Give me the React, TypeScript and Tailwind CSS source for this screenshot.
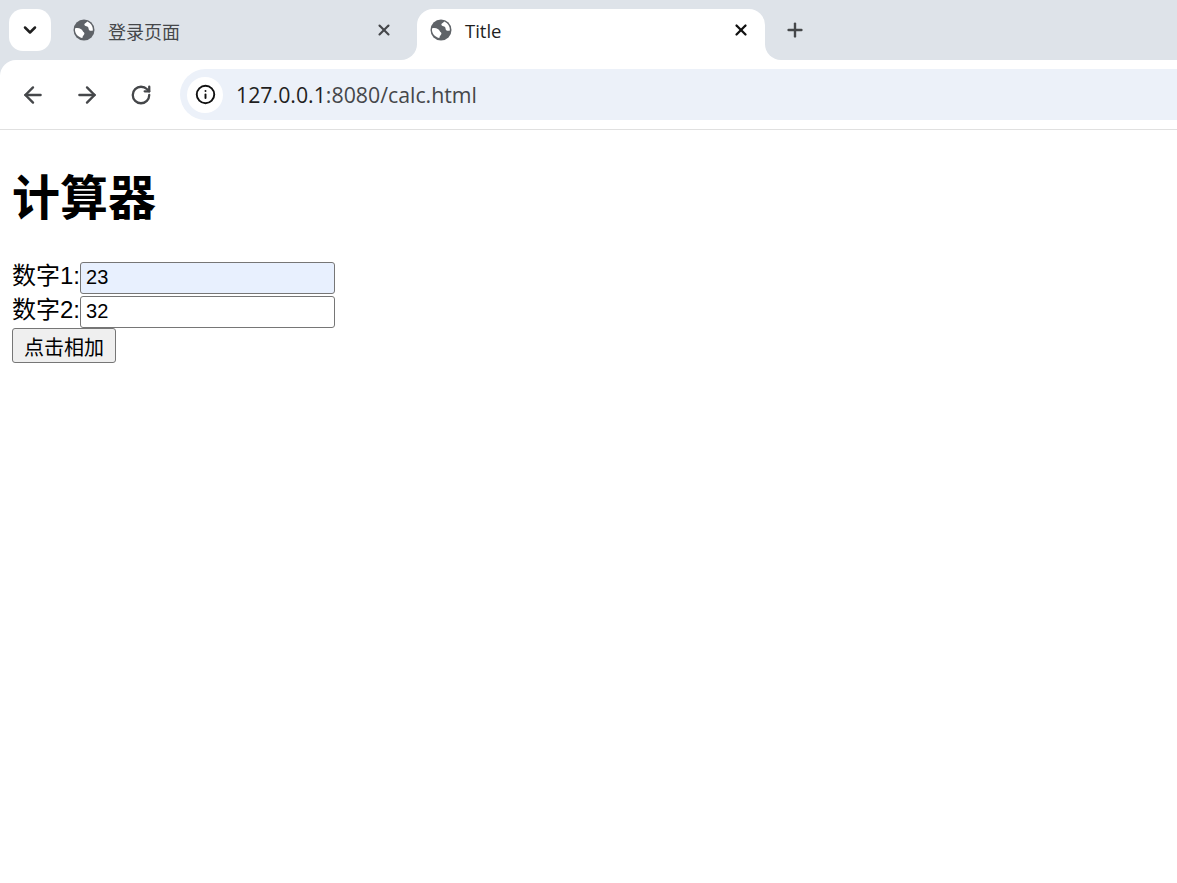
import { ArrowLeft, ArrowRight, ChevronDown, Info, Plus, RotateCw, X } from "lucide-react";

const cjk = "font-['Liberation_Sans','Noto_Sans_CJK_SC',sans-serif]";

function Globe() {
  return (
    <svg viewBox="0 0 22 22" className="h-[22px] w-[22px] shrink-0">
      <circle cx="11" cy="11" r="10.500" fill="#5f6368" />
      <path
        d="M2.200 9.200c2.300-.6 4.300-.2 6 1.100 1.300 1 1.600 2.300 2.600 3 .7.500.8 1.400.3 2.200-.7 1-1.500 1.700-1.700 3.400-3.800-.6-6.900-3.700-7.400-7.500-.1-.7 0-1.500.2-2.200z"
        fill="#fff"
      />
      <path
        d="M14.300 2.600c-.9 1.300-2.500 1.500-2.900 2.700-.3 1.100.9 1.700 2 1.900 1.300.2 2 1 2.100 2 .1 1.100.4 2.100 1.500 2.500 1 .3 1.900.2 2.900-.2.200-3.900-2-7.400-5.600-8.900z"
        fill="#fff"
      />
    </svg>
  );
}

function Tabs() {
  return (
    <div className="flex h-[60px] items-start bg-[#dee3e9]">
      <div className="ml-[9px] mt-[9px] flex h-[42px] w-[42px] items-center justify-center rounded-[14px] bg-white">
        <ChevronDown size={20} strokeWidth={3} className="text-[#1f1f1f]" />
      </div>
      {/* inactive tab */}
      <div className="ml-[22px] mt-[9px] flex h-[42px] w-[343px] items-center">
        <Globe />
        <span className={`ml-[13px] pt-1.5 text-[18px] text-[#45474a] ${cjk}`}>登录页面</span>
        <X size={18} strokeWidth={2.8} className="ml-auto mr-[23px] text-[#45474a]" />
      </div>
      {/* active tab */}
      <div className="relative ml-[1px] mt-[9px] flex h-[51px] w-[348px] rounded-t-[16px] bg-white pl-[13px]">
        <span className="absolute bottom-0 left-[-16px] h-4 w-4 bg-white" />
        <span className="absolute bottom-0 left-[-16px] h-4 w-4 rounded-br-[16px] bg-[#dee3e9]" />
        <span className="absolute bottom-0 right-[-16px] h-4 w-4 bg-white" />
        <span className="absolute bottom-0 right-[-16px] h-4 w-4 rounded-bl-[16px] bg-[#dee3e9]" />
        <div className="flex h-[42px] w-full items-center">
          <Globe />
          <span className="ml-[13px] pt-0.5 font-['Open_Sans',sans-serif] text-[18.500px] text-[#1f1f1f]">Title</span>
          <X size={18} strokeWidth={3} className="ml-auto mr-[15px] text-[#111]" />
        </div>
      </div>
      <Plus size={22} strokeWidth={2.6} className="ml-[19px] mt-[19px] text-[#45474a]" />
    </div>
  );
}

function Toolbar() {
  return (
    <div className="bg-[#dee3e9]">
      <div className="flex h-[70px] items-center overflow-hidden rounded-tl-[16px] border-b border-[#e0e0e0] bg-white pl-[20px]">
        <ArrowLeft size={26} strokeWidth={2.2} className="text-[#45474a]" />
        <ArrowRight size={26} strokeWidth={2.2} className="ml-[28px] text-[#45474a]" />
        <RotateCw size={22} strokeWidth={2.5} className="ml-[30px] text-[#45474a]" />
        <div className="ml-[28px] flex h-[51px] flex-1 items-center rounded-l-[26px] bg-[#ecf1f9] pl-[7px]">
          <div className="flex h-9 w-9 items-center justify-center rounded-full bg-white">
            <Info size={21} strokeWidth={2.2} className="text-[#111]" />
          </div>
          <span className="ml-[13px] font-['Open_Sans',sans-serif] text-[21.300px] text-[#45474a]">
            <span className="text-[#1f1f1f]">127.0.0.1</span>:8080/calc.html
          </span>
        </div>
      </div>
    </div>
  );
}

export default function App() {
  return (
    <div className="min-h-[883px] bg-white">
      <Tabs />
      <Toolbar />
      <div className={`px-3 text-black ${cjk}`}>
        <h1 className="mt-[39px] mb-[32px] text-[48px] leading-[60px] font-bold">计算器</h1>
        <div className="flex h-[34px] items-center text-[24px]">
          <span className="-mt-1">数字1:</span>
          <input
            defaultValue="23"
            className="h-8 w-[255px] rounded-[3px] border border-[#767676] bg-[#e8f0fe] px-[5px] pb-0.5 text-[20px]"
          />
        </div>
        <div className="flex h-[34px] items-center text-[24px]">
          <span className="-mt-1">数字2:</span>
          <input
            defaultValue="32"
            className="h-8 w-[255px] rounded-[3px] border border-[#767676] bg-white px-[5px] pb-0.5 text-[20px]"
          />
        </div>
        <button className="-mt-px block h-[35px] w-[104px] rounded-[3px] border border-[#767676] bg-[#efefef] pt-1 text-[20px]">
          点击相加
        </button>
      </div>
    </div>
  );
}
